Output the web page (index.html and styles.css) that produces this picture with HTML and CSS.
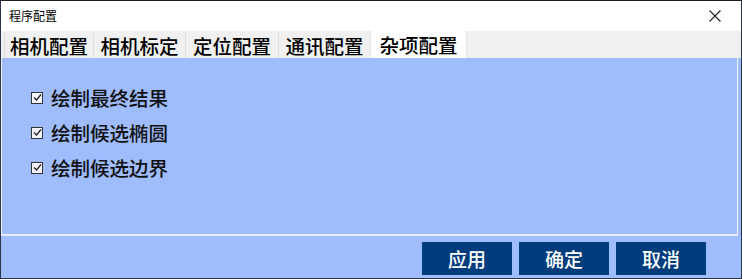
FILE: index.html
```html
<!DOCTYPE html>
<html lang="zh">
<head>
<meta charset="utf-8">
<title>程序配置</title>
<link rel="stylesheet" href="styles.css">
</head>
<body>
<div class="window">
  <div class="titlebar">
    <span class="title">程序配置</span>
    <span class="close">
      <svg width="12" height="12" viewBox="0 0 12 12"><path d="M0.5 0.5 L11.5 11.5 M11.5 0.5 L0.5 11.5" stroke="#222" stroke-width="1.1" fill="none"/></svg>
    </span>
  </div>
  <div class="tabs">
    <div class="tab t1">相机配置</div>
    <div class="tab t2">相机标定</div>
    <div class="tab t3">定位配置</div>
    <div class="tab t4">通讯配置</div>
    <div class="tab active">杂项配置</div>
  </div>
  <div class="panel">
    <label class="check"><span class="box"><svg width="9" height="9" viewBox="0 0 9 9"><path d="M1 4.5 L3.5 7 L8 1.5" stroke="#222" stroke-width="1.3" fill="none"/></svg></span><span>绘制最终结果</span></label>
    <label class="check"><span class="box"><svg width="9" height="9" viewBox="0 0 9 9"><path d="M1 4.5 L3.5 7 L8 1.5" stroke="#222" stroke-width="1.3" fill="none"/></svg></span><span>绘制候选椭圆</span></label>
    <label class="check"><span class="box"><svg width="9" height="9" viewBox="0 0 9 9"><path d="M1 4.5 L3.5 7 L8 1.5" stroke="#222" stroke-width="1.3" fill="none"/></svg></span><span>绘制候选边界</span></label>
  </div>
  <div class="footer">
    <button class="btn">应用</button>
    <button class="btn b2">确定</button>
    <button class="btn">取消</button>
  </div>
</div>
</body>
</html>
```
FILE: styles.css
```css
html, body {
  margin: 0;
  padding: 0;
}
body {
  width: 742px;
  height: 279px;
  overflow: hidden;
  font-family: "Noto Sans CJK SC", "Microsoft YaHei", sans-serif;
  color: #111;
}
.window {
  box-sizing: border-box;
  width: 742px;
  height: 279px;
  display: flex;
  flex-direction: column;
  border: 1px solid #2a3447;
  border-top: 1px solid #1c1f26;
  background: #9fbcfc;
}
.titlebar {
  height: 30px;
  flex: none;
  background: #ffffff;
  display: flex;
  align-items: center;
  justify-content: space-between;
  padding: 0 8px 0 8px;
}
.title {
  font-size: 12px;
  line-height: 1;
  color: #000;
}
.close {
  display: flex;
  width: 12px;
  height: 12px;
  margin-right: 12px;
}
.tabs {
  height: 27px;
  flex: none;
  background: #f0f0f0;
  display: flex;
  align-items: flex-end;
  padding-left: 3px;
}
.tab {
  box-sizing: border-box;
  height: 25px;
  font-size: 19.5px;
  font-weight: 500;
  line-height: 25px;
  padding: 0 4px;
  border-left: 1px solid #dcdcdc;
  color: #000;
  text-align: center;
  white-space: nowrap;
}
.t1 { width: 89px; }
.t2 { width: 92px; }
.t3 { width: 93px; }
.t4 { width: 92px; }
.tab.active {
  width: 97px;
  height: 27px;
  line-height: 27px;
  background: #ffffff;
  border-left: 1px solid #e4e4e4;
  border-right: 1px solid #e4e4e4;
}
.panel {
  box-sizing: border-box;
  height: 178px;
  flex: none;
  margin-right: 3px;
  background: #9fbcfc;
  border-left: 1px solid #f2f5fb;
  border-right: 1px solid #f2f5fb;
  border-bottom: 2px solid #e6ecf8;
  padding: 22px 0 0 29px;
  display: flex;
  flex-direction: column;
}
.check {
  height: 35px;
  display: flex;
  align-items: center;
  gap: 8px;
  font-size: 19.5px;
  font-weight: 500;
  color: #111;
}
.box {
  box-sizing: border-box;
  width: 12px;
  height: 12px;
  border: 1px solid #333;
  background: #f4f6fb;
  display: flex;
  align-items: center;
  justify-content: center;
}
.box svg { display: block; }
.footer {
  flex: 1;
  display: flex;
  justify-content: flex-end;
  align-items: flex-start;
  padding: 6px 35px 0 0;
  gap: 7px;
}
.b2 { margin-left: 1px; }
.btn {
  width: 90px;
  height: 33px;
  border: none;
  background: #013c7c;
  color: #ffffff;
  font-family: "Noto Sans CJK SC", sans-serif;
  font-size: 19px;
  font-weight: 500;
  line-height: 33px;
  padding: 0;
  margin: 0;
}
```
